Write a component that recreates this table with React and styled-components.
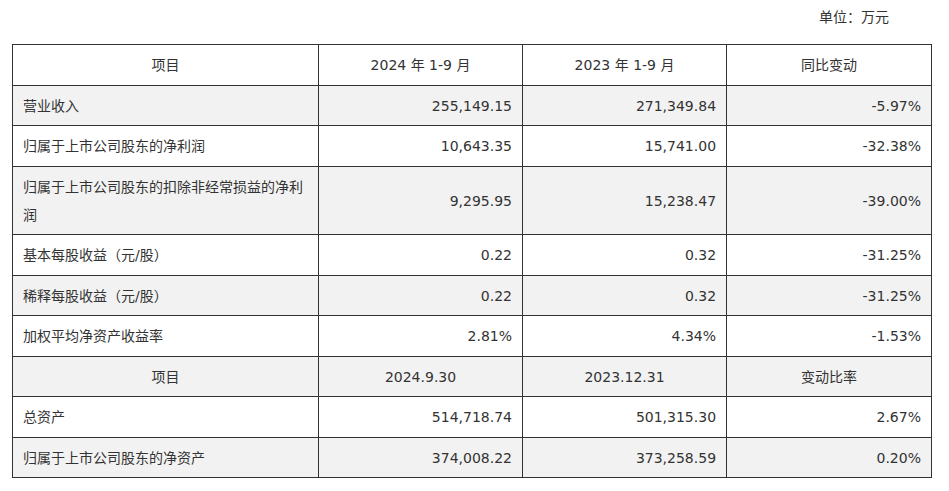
import React from "react";
import styled, { createGlobalStyle } from "styled-components";

const Global = createGlobalStyle`
  html, body { margin: 0; padding: 0; background: #fff; }
  body { font-family: "DejaVu Sans", "Noto Sans CJK SC", sans-serif; color: #333; }
`;

const Page = styled.div`
  padding: 3px 18px 0 12px;
  width: 919px;
`;

const Unit = styled.div`
  display: flex;
  justify-content: flex-end;
  padding-right: 42px;
  font-size: 14px;
  line-height: 28px;
  height: 28px;
  margin-bottom: 13px;
`;

const Table = styled.table`
  width: 920px;
  border-collapse: collapse;
  table-layout: fixed;
  font-size: 14px;
  line-height: 28px;
`;

const Row = styled.tr`
  background: ${(p) => (p.$shade ? "#f2f2f2" : "#fff")};
`;

const Cell = styled.td`
  border: 1px solid #333;
  padding: 6px 10px 5.5px;
  height: 28px;
  text-align: ${(p) => p.$align || "right"};
  vertical-align: middle;
`;

const Head = styled(Cell)`
  text-align: center;
`;

const rows1 = [
  ["营业收入", "255,149.15", "271,349.84", "-5.97%"],
  ["归属于上市公司股东的净利润", "10,643.35", "15,741.00", "-32.38%"],
  ["归属于上市公司股东的扣除非经常损益的净利润", "9,295.95", "15,238.47", "-39.00%"],
  ["基本每股收益（元/股）", "0.22", "0.32", "-31.25%"],
  ["稀释每股收益（元/股）", "0.22", "0.32", "-31.25%"],
  ["加权平均净资产收益率", "2.81%", "4.34%", "-1.53%"],
];

const rows2 = [
  ["总资产", "514,718.74", "501,315.30", "2.67%"],
  ["归属于上市公司股东的净资产", "374,008.22", "373,258.59", "0.20%"],
];

export default function App() {
  let idx = 0;
  const dataRow = (r) => {
    idx += 1;
    return (
      <Row key={idx} $shade={idx % 2 === 1}>
        <Cell $align="left">{r[0]}</Cell>
        <Cell>{r[1]}</Cell>
        <Cell>{r[2]}</Cell>
        <Cell>{r[3]}</Cell>
      </Row>
    );
  };
  const body1 = rows1.map(dataRow);
  idx += 1;
  const head2 = (
    <Row key="h2" $shade={idx % 2 === 1}>
      <Head>项目</Head>
      <Head>2024.9.30</Head>
      <Head>2023.12.31</Head>
      <Head>变动比率</Head>
    </Row>
  );
  const body2 = rows2.map(dataRow);
  return (
    <>
      <Global />
      <Page>
        <Unit>单位：万元</Unit>
        <Table>
          <colgroup>
            <col style={{ width: "33.3%" }} />
            <col style={{ width: "22.2%" }} />
            <col style={{ width: "22.2%" }} />
            <col style={{ width: "22.3%" }} />
          </colgroup>
          <tbody>
            <Row>
              <Head>项目</Head>
              <Head>2024 年 1-9 月</Head>
              <Head>2023 年 1-9 月</Head>
              <Head>同比变动</Head>
            </Row>
            {body1}
            {head2}
            {body2}
          </tbody>
        </Table>
      </Page>
    </>
  );
}
